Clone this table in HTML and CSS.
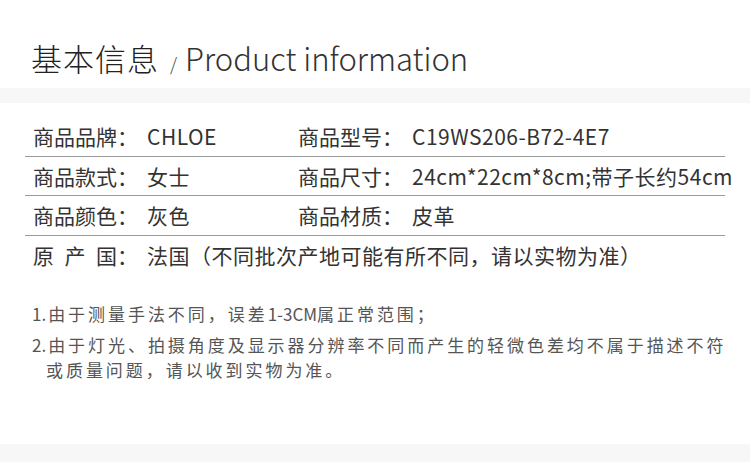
FILE: index.html
```html
<!DOCTYPE html>
<html lang="zh-CN">
<head>
<meta charset="utf-8">
<title>基本信息</title>
<link rel="stylesheet" href="styles.css">
</head>
<body>
<div class="page">
  <header class="head">
    <h1 class="title"><span class="title-cn">基本信息</span><span class="slash">/</span><span class="title-en">Product information</span></h1>
  </header>
  <div class="band"></div>
  <section class="table">
    <div class="row">
      <div class="cell"><span class="label">商品品牌：</span><span class="value">CHLOE</span></div>
      <div class="cell"><span class="label">商品型号：</span><span class="value">C19WS206-B72-4E7</span></div>
    </div>
    <div class="row">
      <div class="cell"><span class="label">商品款式：</span><span class="value">女士</span></div>
      <div class="cell"><span class="label">商品尺寸：</span><span class="value">24cm*22cm*8cm;带子长约54cm</span></div>
    </div>
    <div class="row">
      <div class="cell"><span class="label">商品颜色：</span><span class="value">灰色</span></div>
      <div class="cell"><span class="label">商品材质：</span><span class="value">皮革</span></div>
    </div>
    <div class="row row-last">
      <div class="cell cell-wide"><span class="label"><span class="just">原产国</span>：</span><span class="value">法国（不同批次产地可能有所不同，请以实物为准）</span></div>
    </div>
  </section>
  <section class="notes">
    <p class="note"><span class="num">1.</span>由于测量手法不同，误差<span class="latin">1-3CM</span>属正常范围；</p>
    <p class="note"><span class="num">2.</span>由于灯光、拍摄角度及显示器分辨率不同而产生的轻微色差均不属于描述不符或质量问题，请以收到实物为准。</p>
  </section>
  <div class="spacer"></div>
  <div class="band band-bottom"></div>
</div>
</body>
</html>
```

FILE: styles.css
```css
* { box-sizing: border-box; }
html, body { margin: 0; padding: 0; background: #fff; }
body {
  font-family: "Noto Sans CJK SC", "Noto Sans", sans-serif;
  color: #333;
  width: 750px;
  height: 462px;
  overflow: hidden;
}
.page {
  display: flex;
  flex-direction: column;
  height: 462px;
}
.head {
  height: 88px;
  display: flex;
  align-items: flex-end;
  padding: 0 0 5px 31px;
}
.title {
  margin: 0;
  font-weight: 300;
  font-size: 31px;
  line-height: 40px;
  color: #222;
  display: flex;
  align-items: baseline;
}
.title-cn { letter-spacing: 1px; }
.slash {
  font-size: 18px;
  color: #444;
  margin: 0 8px 0 11px;
}
.title-en {
  font-size: 31px;
  color: #333;
  letter-spacing: 0;
}
.band {
  height: 15px;
  background: #f7f7f7;
  flex: none;
}
.table {
  margin: 14px 25px 0;
}
.row {
  display: flex;
  height: 39.5px;
  border-bottom: 1px solid #9a9a9a;
  align-items: center;
  padding-left: 8px;
  font-size: 21px;
  color: #333;
}
.row-last { border-bottom: none; }
.cell {
  width: 265px;
  display: flex;
  white-space: nowrap;
}
.cell-wide { width: auto; }
.label {
  display: inline-flex;
  width: 105px;
  flex: none;
}
.just {
  display: inline-block;
  width: 86px;
  text-align: justify;
  text-align-last: justify;
}
.value {
  margin-left: 9px;
  letter-spacing: 0.5px;
}
.notes {
  margin-top: 26px;
  padding: 0 20px 0 32px;
  color: #555;
}
.note {
  margin: 0 0 6px;
  font-size: 17px;
  line-height: 25px;
  letter-spacing: 2.95px;
  padding-left: 14px;
  text-indent: -14px;
}
.num {
  letter-spacing: 0;
  margin-right: 2px;
}
.latin { letter-spacing: 0; }
.spacer { flex: 1; }
.band-bottom {
  height: 18px;
}
```
